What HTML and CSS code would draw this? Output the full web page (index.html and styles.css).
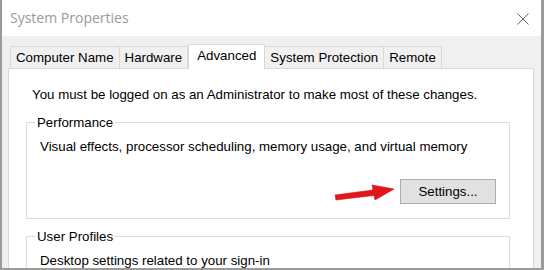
FILE: index.html
```html
<!DOCTYPE html>
<html lang="en">
<head>
  <meta charset="UTF-8">
  <title>System Properties</title>
  <link rel="stylesheet" href="styles.css">
</head>
<body>
  <div class="window">
    <div class="titlebar">
      <span class="title">System Properties</span>
      <svg class="close" width="12" height="12" viewBox="0 0 12 12">
        <path d="M0.5 0.5 L11.5 11.5 M11.5 0.5 L0.5 11.5" stroke="#666" stroke-width="1" fill="none"/>
      </svg>
    </div>

    <div class="client">
      <div class="tabs">
        <div class="tab">Computer Name</div>
        <div class="tab">Hardware</div>
        <div class="tab active">Advanced</div>
        <div class="tab">System Protection</div>
        <div class="tab">Remote</div>
      </div>

      <div class="panel">
        <p class="note">You must be logged on as an Administrator to make most of these changes.</p>

        <fieldset class="group">
          <legend>Performance</legend>
          <p>Visual effects, processor scheduling, memory usage, and virtual memory</p>
          <div class="actions">
            <svg class="arrow" width="61" height="19" viewBox="0 0 61 19">
              <path d="M1 12 L39 7 L38 2 L60 6 L41 17 L40 12.5 L2 17 Z" fill="#e3151b" stroke="#c8161b" stroke-width="0.6" stroke-linejoin="round"/>
            </svg>
            <button class="btn">Settings...</button>
          </div>
        </fieldset>

        <fieldset class="group">
          <legend>User Profiles</legend>
          <p>Desktop settings related to your sign-in</p>
        </fieldset>
      </div>
    </div>
  </div>
</body>
</html>
```

FILE: styles.css
```css
body {
  margin: 0;
  font-family: "Liberation Sans", Arial, sans-serif;
  font-size: 13.3px;
  color: #000;
  background: #f0f0f0;
}
.window {
  height: 270px;
  box-sizing: border-box;
  border-left: 2px solid #9b9b9b;
  border-right: 3px solid #9b9b9b;
  border-bottom: 2px solid #9b9b9b;
  display: flex;
  flex-direction: column;
  overflow: hidden;
}
.titlebar {
  height: 36px;
  flex: none;
  background: #fff;
  display: flex;
  align-items: center;
  justify-content: space-between;
  padding: 0 12px 0 8px;
}
.title {
  font-family: "Open Sans", sans-serif;
  font-size: 14px;
  color: #9a9a9a;
  margin-top: -1px;
}
.close {
  margin-top: 1px;
}
.client {
  flex: 1;
  display: flex;
  flex-direction: column;
  padding: 8px 7px 0 6px;
  min-height: 0;
}
.tabs {
  display: flex;
  align-items: flex-end;
  height: 24px;
  padding-left: 2px;
}
.tab {
  height: 22px;
  line-height: 22px;
  padding: 0 5px;
  border: 1px solid #d9d9d9;
  border-bottom: none;
  border-left: none;
  box-sizing: border-box;
  background: #f0f0f0;
}
.tab:first-child {
  border-left: 1px solid #d9d9d9;
}
.tab.active {
  height: 25px;
  line-height: 22px;
  padding: 0 8px;
  background: #fff;
  border-left: 1px solid #d9d9d9;
  margin-bottom: -1px;
  position: relative;
  z-index: 1;
}
.panel {
  flex: 1;
  background: #fff;
  border: 1px solid #d9d9d9;
  border-bottom: none;
  padding: 18px 23px 0 17px;
}
.note {
  margin: 0 0 0 6px;
}
.group {
  margin: 13px 0 0 0;
  padding: 9px 10px 14px 13px;
  border: 1px solid #dcdcdc;
}
.group + .group {
  margin-top: 10px;
}
.group legend {
  padding: 0 2px;
  margin-left: -5px;
}
.group p {
  margin: 0;
}
.actions {
  position: relative;
  display: flex;
  justify-content: flex-end;
  margin-top: 25px;
  margin-right: 3px;
}
.btn {
  width: 96px;
  height: 25px;
  font-family: inherit;
  font-size: 13.3px;
  color: #000;
  background: #e1e1e1;
  border: 1px solid #adadad;
  border-radius: 0;
  padding: 0;
}
.arrow {
  position: absolute;
  right: 101px;
  top: 4px;
}
```
